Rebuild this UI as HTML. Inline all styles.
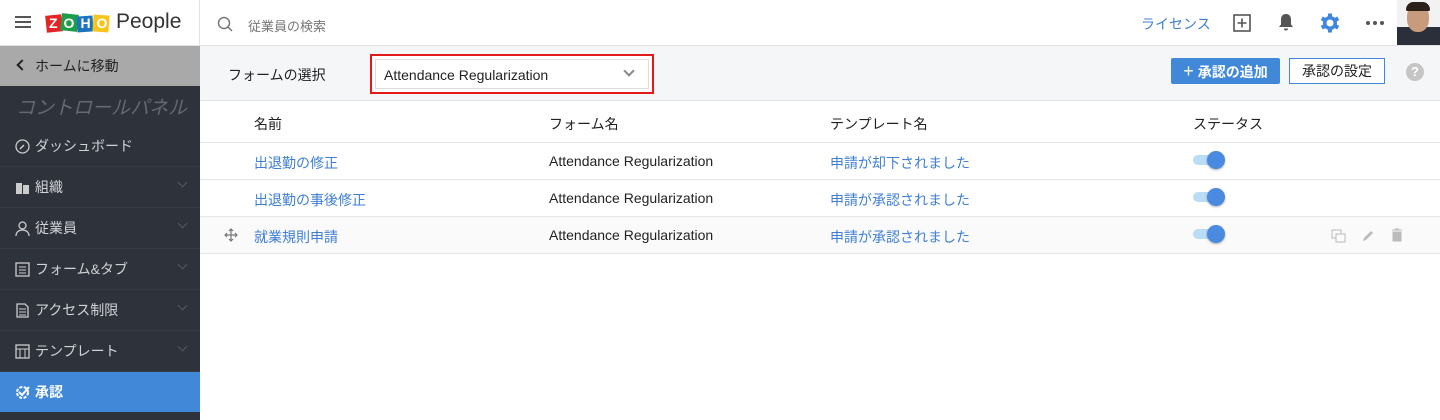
<!DOCTYPE html>
<html><head><meta charset="utf-8"><style>
*{margin:0;padding:0;box-sizing:border-box}
body{width:1440px;height:420px;overflow:hidden;font-family:"Liberation Sans","Noto Sans CJK JP",sans-serif;font-size:14px;color:#222;background:#fff;position:relative}
.abs{position:absolute}
.top{left:0;top:0;width:1440px;height:46px;border-bottom:1px solid #e2e2e2;background:#fff}
.side{left:0;top:46px;width:200px;height:374px;background:#2e333b}
.si{position:absolute;left:0;width:200px;height:41px;border-bottom:1px solid #353a43;color:#d0d2d5;font-size:14px;line-height:41px;padding-left:35px}
.si svg{position:absolute;left:15px;top:13px}
.chev{position:absolute;right:14px;top:12px;width:7px;height:7px;border-right:1px solid #555a62;border-bottom:1px solid #555a62;transform:rotate(45deg)}
.blue{color:#3f7fd3}
.tog{position:absolute;width:32px;height:10px;border-radius:5px;background:#b9dcf7}
.tog i{position:absolute;right:0;top:-4px;width:18px;height:18px;border-radius:50%;background:#4a8ae0;box-shadow:0 1px 2px rgba(0,0,0,.3)}
.row{position:absolute;left:200px;width:1240px;border-bottom:1px solid #e6e6e6}
</style></head><body>
<div class="abs top"></div>
<div class="abs" style="left:199px;top:0;width:1px;height:46px;background:#e2e2e2"></div>
<div class="abs" style="left:15px;top:16px;width:16px;height:2px;background:#555;box-shadow:0 5px 0 #555,0 10px 0 #555"></div>
<div class="abs" style="left:46px;top:14px;width:64px;height:20px">
<span class="abs" style="left:0;top:1px;width:16px;height:17px;background:#e42527;transform:rotate(-6deg)"></span>
<span class="abs" style="left:15px;top:0;width:17px;height:17px;background:#1d9f48;transform:rotate(6deg)"></span>
<span class="abs" style="left:31px;top:2px;width:16px;height:16px;background:#1e73be;transform:rotate(-4deg)"></span>
<span class="abs" style="left:47px;top:1px;width:16px;height:17px;background:#f8c51c;transform:rotate(4deg)"></span>
<span class="abs" style="left:0;top:0;width:64px;color:#fff;font-weight:bold;font-size:14px;letter-spacing:6px;padding-left:3px;line-height:18px">ZOHO</span></div>
<div class="abs" style="left:116px;top:10px;font-size:21px;color:#333">People</div>
<svg class="abs" style="left:217px;top:16px" width="16" height="16"><circle cx="7" cy="7" r="5.5" fill="none" stroke="#777" stroke-width="1.5"/><path d="M11 11l4 4" stroke="#777" stroke-width="1.5"/></svg>
<div class="abs" style="left:248px;top:16px;font-size:13px;color:#777">従業員の検索</div>
<div class="abs blue" style="left:1141px;top:14px;font-size:14px">ライセンス</div>
<svg class="abs" style="left:1233px;top:14px" width="18" height="18"><rect x="1" y="1" width="16" height="16" fill="none" stroke="#555" stroke-width="1.6"/><path d="M9 4.5v9M4.5 9h9" stroke="#555" stroke-width="1.6"/></svg>
<svg class="abs" style="left:1277px;top:13px" width="18" height="19"><path d="M9 1c-3.5 0-5 2.5-5 5.5v5L2 14h14l-2-2.5v-5C14 3.5 12.5 1 9 1zM7 15.5a2 2 0 0 0 4 0z" fill="#555"/></svg>
<svg class="abs" style="left:1320px;top:13px" width="20" height="20" viewBox="0 0 20 20"><g fill="#3f86df"><circle cx="10" cy="10" r="7"/><rect x="8" y="0.5" width="4" height="19"/><rect x="8" y="0.5" width="4" height="19" transform="rotate(60 10 10)"/><rect x="8" y="0.5" width="4" height="19" transform="rotate(120 10 10)"/></g><circle cx="10" cy="10" r="3.5" fill="#fff"/></svg>
<div class="abs" style="left:1366px;top:21px;width:4px;height:4px;border-radius:50%;background:#555;box-shadow:7px 0 0 #555,14px 0 0 #555"></div>
<div class="abs" style="left:1397px;top:0;width:43px;height:45px;background:linear-gradient(#f2f2f2 0,#f2f2f2 60%,#2a2f3a 60%)"><div class="abs" style="left:10px;top:4px;width:22px;height:28px;border-radius:45%;background:#c79b7c"></div><div class="abs" style="left:9px;top:2px;width:24px;height:9px;border-radius:10px 10px 2px 2px;background:#2a2219"></div></div>

<div class="abs side"></div>
<div class="abs" style="left:0;top:46px;width:200px;height:40px;background:#a9a9a9;color:#222;font-size:14px;line-height:40px;padding-left:35px">ホームに移動</div>
<div class="abs" style="left:18px;top:61px;width:8px;height:8px;border-left:2px solid #222;border-bottom:2px solid #222;transform:rotate(45deg)"></div>
<div class="abs" style="left:16px;top:93px;font-size:19px;color:#656a72;font-style:italic">コントロールパネル</div>
<div class="si" style="top:126px"><svg width="15" height="15"><circle cx="7.5" cy="7.5" r="6.5" fill="none" stroke="#ccc" stroke-width="1.3"/><path d="M5 10l4-4" stroke="#ccc" stroke-width="1.5"/></svg>ダッシュボード</div>
<div class="si" style="top:167px"><svg width="15" height="15"><path d="M1 3h6v11H1zM8 5h6v9H8z" fill="#ccc"/></svg>組織<span class="chev"></span></div>
<div class="si" style="top:208px"><svg width="15" height="15"><circle cx="7.5" cy="4.5" r="3.5" fill="none" stroke="#ccc" stroke-width="1.3"/><path d="M1 15c0-4 3-6 6.5-6S14 11 14 15" fill="none" stroke="#ccc" stroke-width="1.3"/></svg>従業員<span class="chev"></span></div>
<div class="si" style="top:249px"><svg width="15" height="15"><rect x="1" y="1" width="13" height="13" fill="none" stroke="#ccc" stroke-width="1.3"/><path d="M4 5h7M4 8h7M4 11h7" stroke="#ccc"/></svg>フォーム&amp;タブ<span class="chev"></span></div>
<div class="si" style="top:290px"><svg width="15" height="15"><path d="M2 1h8l3 3v10H2z" fill="none" stroke="#ccc" stroke-width="1.3"/><path d="M4 6h7M4 9h7M4 12h7" stroke="#ccc"/></svg>アクセス制限<span class="chev"></span></div>
<div class="si" style="top:331px"><svg width="15" height="15"><rect x="1" y="1" width="13" height="13" fill="none" stroke="#ccc" stroke-width="1.3"/><path d="M1 5h13M5 5v9M10 5v9" stroke="#ccc"/></svg>テンプレート<span class="chev"></span></div>
<div class="si" style="top:372px;background:#4189d8;color:#fff;font-weight:bold;border:none;height:40px;line-height:40px"><svg width="15" height="15"><circle cx="7.5" cy="7.5" r="5.5" fill="none" stroke="#fff" stroke-width="2" stroke-dasharray="3 1.5"/><path d="M4 7l3 3 7-8" fill="none" stroke="#fff" stroke-width="2"/></svg>承認</div>

<div class="abs" style="left:200px;top:46px;width:1240px;height:55px;background:#f5f6f8;border-bottom:1px solid #e3e3e3"></div>
<div class="abs" style="left:228px;top:65px;font-size:14px">フォームの選択</div>
<div class="abs" style="left:370px;top:54px;width:284px;height:40px;border:2px solid #e41a1a;background:#fff"><div class="abs" style="left:3px;top:3px;right:3px;bottom:3px;border:1px solid #ddd"></div><div class="abs" style="left:12px;top:11px;font-size:14px">Attendance Regularization</div><div class="abs" style="left:253px;top:11px;width:8px;height:8px;border-right:2px solid #888;border-bottom:2px solid #888;transform:rotate(45deg)"></div></div>
<div class="abs" style="left:1171px;top:58px;width:109px;height:26px;background:#4189d8;border-radius:2px;color:#fff;font-size:14px;line-height:26px;text-align:center;font-weight:bold"><span style="font-weight:normal;font-size:18px">+</span> 承認の追加</div>
<div class="abs" style="left:1289px;top:58px;width:96px;height:26px;background:#fff;border:1px solid #4189d8;font-size:14px;line-height:24px;text-align:center">承認の設定</div>
<div class="abs" style="left:1406px;top:63px;width:18px;height:18px;border-radius:50%;background:#c5c5c5;color:#fff;font-weight:bold;font-size:13px;text-align:center;line-height:18px">?</div>

<div class="row" style="top:101px;height:42px"></div>
<div class="abs" style="left:254px;top:114px">名前</div>
<div class="abs" style="left:549px;top:114px">フォーム名</div>
<div class="abs" style="left:830px;top:114px">テンプレート名</div>
<div class="abs" style="left:1193px;top:114px">ステータス</div>

<div class="row" style="top:143px;height:37px"></div>
<div class="abs blue" style="left:254px;top:153px">出退勤の修正</div>
<div class="abs" style="left:549px;top:153px">Attendance Regularization</div>
<div class="abs blue" style="left:830px;top:153px">申請が却下されました</div>
<div class="tog" style="left:1193px;top:155px"><i></i></div>

<div class="row" style="top:180px;height:37px"></div>
<div class="abs blue" style="left:254px;top:190px">出退勤の事後修正</div>
<div class="abs" style="left:549px;top:190px">Attendance Regularization</div>
<div class="abs blue" style="left:830px;top:190px">申請が承認されました</div>
<div class="tog" style="left:1193px;top:192px"><i></i></div>

<div class="row" style="top:217px;height:37px;background:#fafafa"></div>
<svg class="abs" style="left:224px;top:228px" width="14" height="14"><path d="M7 1v12M1 7h12M5 3l2-2 2 2M5 11l2 2 2-2M3 5L1 7l2 2M11 5l2 2-2 2" fill="none" stroke="#777" stroke-width="1.2"/></svg>
<div class="abs blue" style="left:254px;top:227px">就業規則申請</div>
<div class="abs" style="left:549px;top:227px">Attendance Regularization</div>
<div class="abs blue" style="left:830px;top:227px">申請が承認されました</div>
<div class="tog" style="left:1193px;top:229px"><i></i></div>
<svg class="abs" style="left:1331px;top:229px" width="15" height="14"><rect x="1" y="1" width="9" height="8" fill="#fafafa" stroke="#bbb"/><rect x="5" y="5" width="9" height="8" fill="#fafafa" stroke="#bbb"/></svg>
<svg class="abs" style="left:1362px;top:229px" width="13" height="13"><path d="M1 12l1-3 7-7 2 2-7 7z" fill="#bbb"/></svg>
<svg class="abs" style="left:1391px;top:228px" width="12" height="14"><path d="M1 2h10M4 1h4M2 4h8v9H2z" fill="#bbb" stroke="#bbb"/></svg>
</body></html>
